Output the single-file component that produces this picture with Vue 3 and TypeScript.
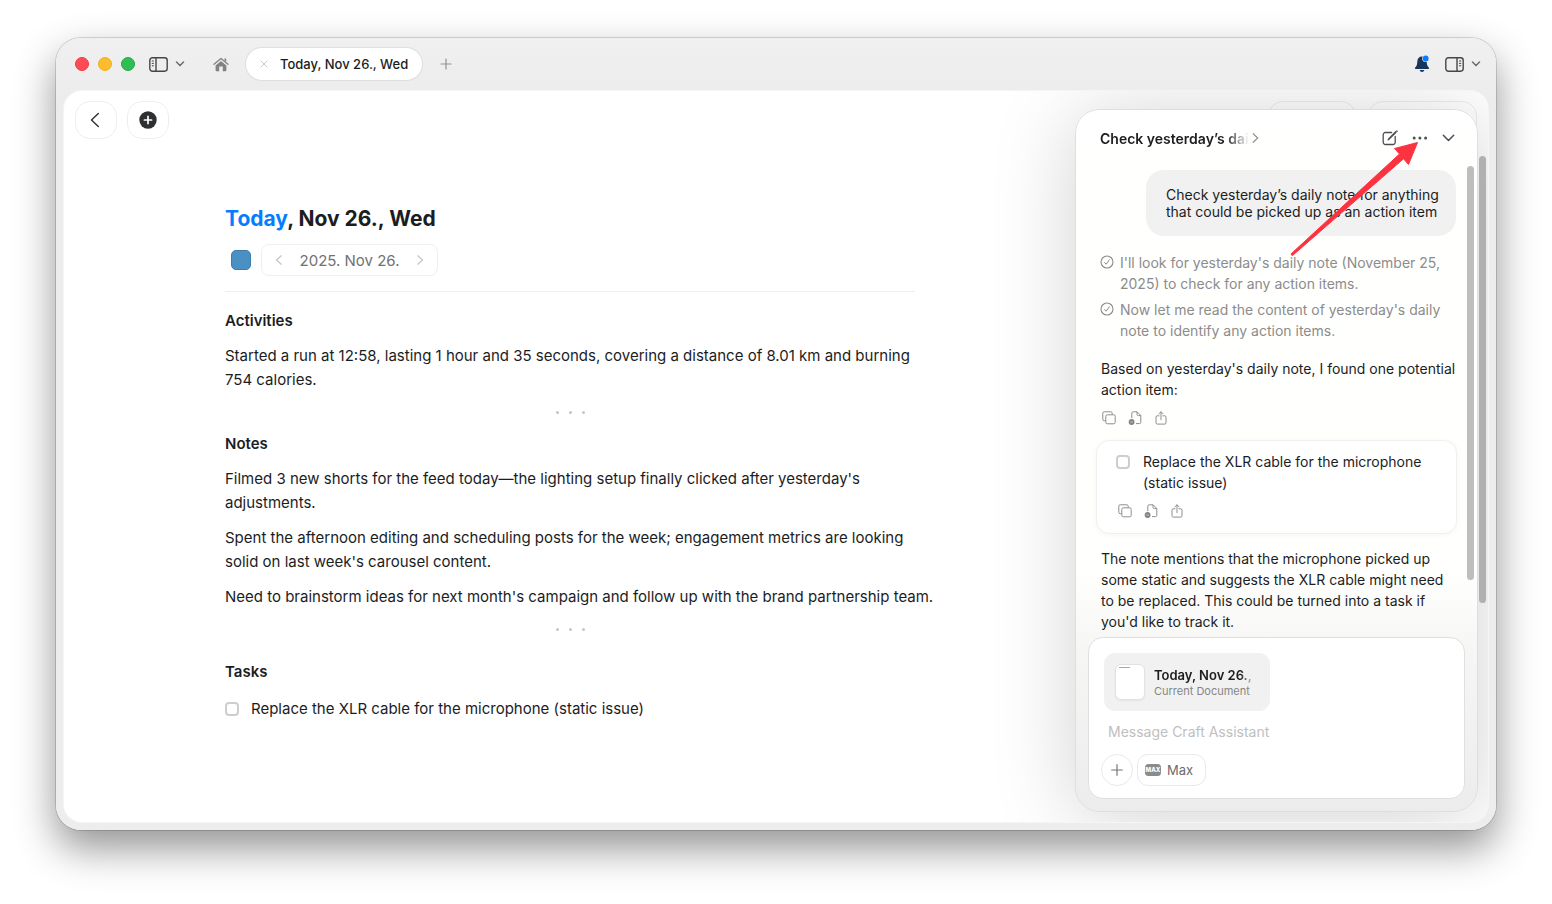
<script setup lang="ts">
import { ref } from 'vue'

interface Section {
  title: string
  paragraphs: string[]
}

const sections: Section[] = [
  {
    title: 'Activities',
    paragraphs: [
      'Started a run at 12:58, lasting 1 hour and 35 seconds, covering a distance of 8.01 km and burning 754 calories.',
    ],
  },
  {
    title: 'Notes',
    paragraphs: [
      "Filmed 3 new shorts for the feed today—the lighting setup finally clicked after yesterday's adjustments.",
      "Spent the afternoon editing and scheduling posts for the week; engagement metrics are looking solid on last week's carousel content.",
      "Need to brainstorm ideas for next month's campaign and follow up with the brand partnership team.",
    ],
  },
]

const steps: string[] = [
  "I'll look for yesterday's daily note (November 25, 2025) to check for any action items.",
  "Now let me read the content of yesterday's daily note to identify any action items.",
]

const taskText = 'Replace the XLR cable for the microphone (static issue)'
const taskDone = ref(false)
const suggestionDone = ref(false)
const message = ref('')
</script>

<template>
  <div class="desktop">
    <div class="window">
      <header class="titlebar">
        <div class="lights">
          <button class="light red" aria-label="Close window"></button>
          <button class="light yellow" aria-label="Minimize window"></button>
          <button class="light green" aria-label="Zoom window"></button>
        </div>
        <button class="plain side-toggle" aria-label="Toggle sidebar">
          <svg width="19" height="15" viewBox="0 0 19 15" fill="none" stroke="#444648" stroke-width="1.4">
            <rect x="0.8" y="0.8" width="17.4" height="13.4" rx="2.6" />
            <path d="M7 1v13" />
            <path d="M2.8 4h2M2.8 6.4h2M2.8 8.8h2" stroke-width="1" />
          </svg>
        </button>
        <button class="plain side-menu" aria-label="Sidebar options">
          <svg width="10" height="6" viewBox="0 0 10 6" fill="none" stroke="#6c6e70" stroke-width="1.5" stroke-linecap="round" stroke-linejoin="round"><path d="M1.5 1 5 4.6 8.5 1" /></svg>
        </button>
        <button class="plain home" aria-label="Home">
          <svg width="16" height="15" viewBox="0 0 16 15">
            <path d="M1 7.3 8 1.4l7 5.9" fill="none" stroke="#808284" stroke-width="1.3" stroke-linecap="round" stroke-linejoin="round" />
            <path d="M11.5 1.6h1.700v3.200l-1.700-1.400z" fill="#808284" />
            <path d="M2.600 8.400 8 3.900 13.400 8.400v4.800a1 1 0 0 1-1 1H9.800V9.600H6.200v4.600H3.600a1 1 0 0 1-1-1z" fill="#808284" />
          </svg>
        </button>
        <div class="tab">
          <button class="plain" aria-label="Close tab">
            <svg width="8" height="8" viewBox="0 0 8 8" stroke="#c9c9c9" stroke-width="1"><path d="M.7.7l6.600 6.600M7.300.7.7 7.300" /></svg>
          </button>
          <span>Today, Nov 26., Wed</span>
        </div>
        <button class="plain new-tab" aria-label="New tab">
          <svg width="12" height="12" viewBox="0 0 12 12" stroke="#909294" stroke-width="1.2" stroke-linecap="round"><path d="M6 1v10M1 6h10" /></svg>
        </button>
        <div class="grow"></div>
        <button class="plain bell" aria-label="Notifications">
          <svg width="16" height="18" viewBox="0 0 16 18">
            <path d="M8 1.6c-3 0-4.6 2.1-4.700 4.900-.1 3.400-.7 4.600-2.100 6-.6.6-.3 1.400.5 1.400h12.600c.8 0 1.100-.8.5-1.400-1.400-1.400-2-2.600-2.100-6C12.600 3.700 11 1.600 8 1.600z" fill="#16365c" />
            <path d="M5.700 15h4.600c-.3 1.200-1.200 1.900-2.300 1.900S6 16.200 5.700 15z" fill="#16365c" />
            <circle cx="11.700" cy="3.500" r="3.500" fill="#efefef" />
            <circle cx="11.700" cy="3.500" r="2.900" fill="#0a7cff" />
          </svg>
        </button>
        <button class="plain right-toggle" aria-label="Toggle assistant">
          <svg width="19" height="15" viewBox="0 0 19 15" fill="none" stroke="#444648" stroke-width="1.4">
            <rect x="0.8" y="0.8" width="17.4" height="13.4" rx="2.6" />
            <path d="M12 1v13" />
            <path d="M14 4h2.200M14 6.400h2.200M14 8.800h2.200" stroke-width="1" />
          </svg>
        </button>
        <button class="plain right-menu" aria-label="Assistant options">
          <svg width="10" height="6" viewBox="0 0 10 6" fill="none" stroke="#6c6e70" stroke-width="1.5" stroke-linecap="round" stroke-linejoin="round"><path d="M1.500 1 5 4.600 8.500 1" /></svg>
        </button>
      </header>

      <div class="content">
        <main class="document">
          <nav class="toolbar">
            <button class="tool" aria-label="Back">
              <svg width="10" height="16" viewBox="0 0 10 16" fill="none" stroke="#333537" stroke-width="1.500" stroke-linecap="round" stroke-linejoin="round"><path d="M8.300 1.500 1.500 8l6.800 6.500" /></svg>
            </button>
            <button class="tool" aria-label="Add">
              <svg width="18" height="18" viewBox="0 0 18 18"><circle cx="9" cy="9" r="8.700" fill="#2d2f31" /><path d="M9 5.400v7.200M5.400 9h7.200" stroke="#fff" stroke-width="1.700" stroke-linecap="round" /></svg>
            </button>
            <div class="grow"></div>
            <div class="ghost short"></div>
            <div class="ghost"></div>
          </nav>

          <article class="page">
            <h1><span>Today</span>, Nov 26., Wed</h1>
            <div class="date-row">
              <button class="swatch" aria-label="Note colour"></button>
              <div class="date-nav">
                <button class="plain" aria-label="Previous day">
                  <svg width="8" height="10" viewBox="0 0 8 10" fill="none" stroke="#c4c4c4" stroke-width="1.200" stroke-linecap="round" stroke-linejoin="round"><path d="M6.200.8 1.500 5l4.700 4.200" /></svg>
                </button>
                <span>2025. Nov 26.</span>
                <button class="plain" aria-label="Next day">
                  <svg width="8" height="10" viewBox="0 0 8 10" fill="none" stroke="#c4c4c4" stroke-width="1.200" stroke-linecap="round" stroke-linejoin="round"><path d="M1.800.8 6.500 5 1.800 9.200" /></svg>
                </button>
              </div>
            </div>
            <hr />
            <section v-for="section in sections" :key="section.title">
              <h2>{{ section.title }}</h2>
              <p v-for="text in section.paragraphs" :key="text">{{ text }}</p>
              <div class="dots"><i></i><i></i><i></i></div>
            </section>
            <section class="tasks">
              <h2>Tasks</h2>
              <label class="task">
                <input v-model="taskDone" type="checkbox" />
                <span>{{ taskText }}</span>
              </label>
            </section>
          </article>
        </main>

        <div class="doc-scroll"></div>

        <aside class="assistant">
          <header class="chat-head">
            <button class="plain chat-title">
              <span>Check yesterday’s dai</span>
              <svg width="7" height="10" viewBox="0 0 7 10" fill="none" stroke="#929292" stroke-width="1.200" stroke-linecap="round" stroke-linejoin="round"><path d="M1.200.7 5.700 5 1.200 9.300" /></svg>
            </button>
            <div class="grow"></div>
            <button class="plain" aria-label="New chat">
              <svg width="16" height="16" viewBox="0 0 16 16" fill="none" stroke="#4c4e50" stroke-width="1.300" stroke-linecap="round" stroke-linejoin="round">
                <path d="M9.600 2.500H3.400A2.200 2.200 0 0 0 1.200 4.700v7.600a2.200 2.200 0 0 0 2.200 2.200h7.600a2.200 2.200 0 0 0 2.200-2.200V6.400" />
                <path d="M14 2.200 7.200 9.100 6.200 9.800l.7-1.200 6.800-6.800" />
                <path d="M14.800.9 15.100 1.200" />
              </svg>
            </button>
            <button class="plain" aria-label="More">
              <svg width="16" height="4" viewBox="0 0 16 4" fill="#4c4e50"><circle cx="2.200" cy="2" r="1.500" /><circle cx="7.900" cy="2" r="1.500" /><circle cx="13.600" cy="2" r="1.500" /></svg>
            </button>
            <button class="plain" aria-label="Collapse">
              <svg width="13" height="8" viewBox="0 0 13 8" fill="none" stroke="#4c4e50" stroke-width="1.500" stroke-linecap="round" stroke-linejoin="round"><path d="M1.300 1.200 6.500 6.500l5.200-5.300" /></svg>
            </button>
          </header>

          <div class="chat">
            <p class="bubble">Check yesterday’s daily note for anything that could be picked up as an action item</p>
            <ul class="steps">
              <li v-for="step in steps" :key="step">
                <svg width="14" height="14" viewBox="0 0 14 14" fill="none" stroke="#8c8c8c" stroke-linecap="round" stroke-linejoin="round"><circle cx="7" cy="7" r="6" stroke-width="1.100" /><path d="M4.600 7.600 6.200 9.200 9.300 4.800" stroke-width="1" /></svg>
                <span>{{ step }}</span>
              </li>
            </ul>
            <p class="answer">Based on yesterday's daily note, I found one potential action item:</p>
            <div class="actions">
              <button class="plain" aria-label="Copy"><svg width="14" height="14"><use href="#icon-copy" /></svg></button>
              <button class="plain" aria-label="Insert in document"><svg width="14" height="14"><use href="#icon-insert" /></svg></button>
              <button class="plain" aria-label="Share"><svg width="14" height="14"><use href="#icon-share" /></svg></button>
            </div>
            <div class="card">
              <label>
                <input v-model="suggestionDone" type="checkbox" />
                <span>{{ taskText }}</span>
              </label>
              <div class="actions">
                <button class="plain" aria-label="Copy"><svg width="14" height="14"><use href="#icon-copy" /></svg></button>
                <button class="plain" aria-label="Insert in document"><svg width="14" height="14"><use href="#icon-insert" /></svg></button>
                <button class="plain" aria-label="Share"><svg width="14" height="14"><use href="#icon-share" /></svg></button>
              </div>
            </div>
            <p class="answer">The note mentions that the microphone picked up some static and suggests the XLR cable might need to be replaced. This could be turned into a task if you'd like to track it.</p>
          </div>

          <form class="composer" @submit.prevent>
            <div class="attachment">
              <div class="thumb"></div>
              <div class="attachment-text">
                <strong>Today, Nov 26.,</strong>
                <small>Current Document</small>
              </div>
            </div>
            <input v-model="message" type="text" placeholder="Message Craft Assistant" aria-label="Message Craft Assistant" />
            <div class="composer-row">
              <button type="button" class="add" aria-label="Attach">
                <svg width="12" height="12" viewBox="0 0 12 12" stroke="#737577" stroke-width="1.200" stroke-linecap="round"><path d="M6 .7v10.600M.7 6h10.600" /></svg>
              </button>
              <button type="button" class="model">
                <svg width="16" height="12" viewBox="0 0 16 12">
                  <rect width="16" height="12" rx="3.500" fill="#8a8b8d" />
                  <text x="8" y="8" text-anchor="middle" font-size="6" font-weight="800" fill="#fff">MAX</text>
                </svg>
                Max
              </button>
            </div>
          </form>
          <div class="chat-scroll"></div>

          <svg class="pointer" width="130" height="116" viewBox="0 0 130 116" aria-hidden="true">
            <path d="M127.500 1.500 104.500 7.500 109.500 13 1.200 112.800Q1 114.600 2.800 114.300L113.500 17.800 118.500 23.500z" fill="#fb3340" stroke="#fb3340" stroke-linejoin="round" />
          </svg>
        </aside>
      </div>
    </div>

    <svg class="symbols" width="0" height="0" aria-hidden="true">
      <symbol id="icon-copy" viewBox="0 0 14 14">
        <g fill="none" stroke="#8e8e8e" stroke-width="1" stroke-linejoin="round">
          <rect x="3.800" y="3.800" width="9.400" height="9" rx="1.500" />
          <path d="M3.500 9.700H2.200A1.400 1.400 0 0 1 .8 8.300V2.200A1.400 1.400 0 0 1 2.200.8h6.600a1.400 1.400 0 0 1 1.400 1.400v1.300" />
        </g>
      </symbol>
      <symbol id="icon-insert" viewBox="0 0 14 14">
        <path d="M3.800 7.200V2.200A1.400 1.400 0 0 1 5.200.8h3.900l3.700 3.700v6.700a1.400 1.400 0 0 1-1.400 1.400H8M9 .9v2.400a1.300 1.300 0 0 0 1.300 1.300h2.400" fill="none" stroke="#8e8e8e" stroke-width="1" stroke-linejoin="round" />
        <circle cx="3.600" cy="11" r="2.900" fill="#858585" />
        <path d="M2.200 11h2.800" stroke="#d5d5d5" stroke-width=".7" />
      </symbol>
      <symbol id="icon-share" viewBox="0 0 14 14">
        <path d="M5 4.800H3.300A1.300 1.300 0 0 0 2 6.100v5.700a1.300 1.300 0 0 0 1.300 1.300h7.400a1.300 1.300 0 0 0 1.300-1.300V6.100a1.300 1.300 0 0 0-1.300-1.300H9M7 8.700V.9M4.900 2.900 7 .8l2.100 2.100" fill="none" stroke="#8e8e8e" stroke-width="1" stroke-linecap="round" stroke-linejoin="round" />
      </symbol>
    </svg>
  </div>
</template>

<style>
body {
  margin: 0;
  background: #fff;
}
</style>

<style scoped>
* {
  box-sizing: border-box;
}
.desktop {
  display: flex;
  min-height: 100vh;
  padding: 38px 56px 74px;
  font-family: Inter, "Liberation Sans", sans-serif;
  color: #1b1d1f;
  overflow: hidden;
}
button,
input {
  font: inherit;
  color: inherit;
}
h1,
h2,
p,
ul {
  margin: 0;
  padding: 0;
}
svg {
  display: block;
  flex: none;
}
.symbols {
  position: absolute;
}
.plain {
  display: flex;
  align-items: center;
  padding: 0;
  border: 0;
  background: none;
}
.grow {
  flex: 1;
}
.window {
  flex: 1;
  min-width: 0;
  display: flex;
  flex-direction: column;
  border-radius: 25px;
  background: linear-gradient(#f0f0f0, #ececec 60px, #ededed);
  box-shadow: 0 0 0 1px rgba(0, 0, 0, 0.14), 0 18px 40px rgba(0, 0, 0, 0.43);
}
.titlebar {
  display: flex;
  align-items: center;
  height: 53px;
  padding: 0 15px 1px 19px;
}
.lights {
  display: flex;
  gap: 9px;
}
.light {
  width: 14px;
  height: 14px;
  padding: 0;
  border: 1px solid;
  border-radius: 50%;
}
.red {
  background: #ff4b55;
  border-color: #ee3c48;
}
.yellow {
  background: #fcbc2d;
  border-color: #eeaf20;
}
.green {
  background: #30bd55;
  border-color: #20ac45;
}
.side-toggle {
  margin-left: 14px;
}
.side-menu {
  margin-left: 7px;
}
.home {
  margin-left: 28px;
}
.tab {
  display: flex;
  align-items: center;
  gap: 12px;
  height: 32px;
  margin-left: 17px;
  padding: 0 14px;
  border-radius: 16px;
  background: #fff;
  box-shadow: 0 0 1px 1px rgba(0, 0, 0, 0.07);
  font-size: 13px;
  font-weight: 500;
}
.new-tab {
  margin-left: 18px;
}
.right-toggle {
  margin-left: 15px;
}
.right-menu {
  margin-left: 7px;
}
.content {
  position: relative;
  flex: 1;
  display: flex;
  margin: 0 8px 8px;
  border-radius: 18px;
  background: #fff;
  box-shadow: 0 0 1px 1px rgba(255, 255, 255, 0.5);
  overflow: hidden;
}
.document {
  flex: 1;
  min-width: 0;
}
.toolbar {
  display: flex;
  gap: 10px;
  padding: 10px 11px 0;
}
.tool {
  display: flex;
  align-items: center;
  justify-content: center;
  width: 42px;
  height: 38px;
  padding: 0;
  border: 1px solid #eee;
  border-radius: 15px;
  background: #fff;
}
.tool:first-child {
  padding-right: 3px;
}
.ghost {
  width: 109px;
  height: 38px;
  border: 1px solid #eee;
  border-radius: 15px;
}
.ghost.short {
  width: 88px;
  margin-right: 2px;
}
.page {
  max-width: 690px;
  margin: 0 auto 0 max(24px, calc((100% - 412px - 690px) / 2));
  padding: 64px 0 40px;
}
h1 {
  font-size: 21px;
  line-height: 32px;
  font-weight: 700;
}
h1 span {
  color: #067dff;
}
.date-row {
  display: flex;
  align-items: center;
  gap: 10px;
  height: 32px;
  margin-top: 9px;
  padding-left: 6px;
}
.swatch {
  width: 20px;
  height: 20px;
  padding: 0;
  border: 1px solid #3d7dac;
  border-radius: 5px;
  background: #4a90c2;
}
.date-nav {
  display: flex;
  align-items: center;
  justify-content: space-between;
  width: 177px;
  height: 32px;
  padding: 0 13px;
  border: 1px solid #efefef;
  border-radius: 8px;
  font-size: 15px;
  color: #727272;
}
hr {
  height: 1px;
  margin: 15px 0 0;
  border: 0;
  background: #efefef;
}
h2 {
  margin-top: 17px;
  font-size: 15px;
  line-height: 24px;
  font-weight: 600;
}
section + section h2 {
  margin-top: 12px;
}
/* Running text may hang slightly past the rule on the right. */
.page p {
  margin: 11px -20px 0 0;
  font-size: 15px;
  line-height: 24px;
}
.page h2 + p {
  margin-top: 11px;
}
.dots {
  display: flex;
  align-items: center;
  justify-content: center;
  gap: 10px;
  height: 16px;
  margin-top: 12px;
}
.dots i {
  width: 3px;
  height: 3px;
  border-radius: 50%;
  background: #c6c6c6;
}
.page .tasks h2 {
  margin-top: 23px;
}
.task {
  display: flex;
  align-items: center;
  gap: 12px;
  margin-top: 13px;
  font-size: 15px;
  line-height: 24px;
}
input[type='checkbox'] {
  appearance: none;
  flex: none;
  width: 14px;
  height: 14px;
  margin: 0;
  border: 2px solid #cdcdcd;
  border-radius: 4px;
  background: #fff;
}
.doc-scroll {
  position: absolute;
  top: 65px;
  right: 2px;
  width: 7px;
  height: 447px;
  border-radius: 4px;
  background: #b0b0b0;
  z-index: 1;
}
.assistant {
  position: absolute;
  top: 18px;
  right: 10px;
  bottom: 10px;
  width: 403px;
  display: flex;
  flex-direction: column;
  padding: 0 12px 12px;
  border: 1px solid #dedede;
  border-radius: 24px;
  background: linear-gradient(#fff 0, #fffffd 460px, #f6f6f5 540px, #ececec 100%);
  box-shadow: 0 6px 84px rgba(0, 0, 0, 0.18);
  font-size: 14px;
}
.chat-head {
  display: flex;
  align-items: center;
  gap: 14px;
  height: 56px;
  padding: 0 10px 0 12px;
}
.chat-title {
  gap: 3px;
  font-weight: 600;
}
.chat-title span {
  white-space: nowrap;
  mask-image: linear-gradient(90deg, #000 84%, transparent);
}
.chat {
  flex: 1;
  min-height: 0;
  overflow: hidden;
  padding: 4px 8px 0;
}
.bubble {
  width: 310px;
  margin: 0 1px 0 auto;
  padding: 16px 12px 16px 20px;
  border-radius: 18px;
  background: #f1f1f1;
  line-height: 17px;
}
.steps {
  display: flex;
  flex-direction: column;
  gap: 5px;
  margin: 16px 0 0 4px;
  list-style: none;
  line-height: 21px;
  color: #8c8c8c;
}
.steps li {
  display: flex;
  gap: 6px;
}
.steps svg {
  margin-top: 3px;
}
.answer {
  margin: 17px 0 0 5px;
  line-height: 21px;
}
.actions {
  display: flex;
  gap: 12px;
  height: 14px;
  margin: 11px 0 0 6px;
}
.card {
  margin-top: 15px;
  padding: 10px 19px 15px;
  border: 1px solid #f0f0f0;
  border-radius: 13px;
  background: #fff;
  box-shadow: 0 1px 6px rgba(0, 0, 0, 0.04);
}
.card label {
  display: flex;
  gap: 13px;
  line-height: 21px;
}
.card input {
  margin-top: 4px;
}
.card .actions {
  margin-left: 2px;
}
.card + .answer {
  margin-top: 14px;
}
.composer {
  display: flex;
  flex-direction: column;
  align-items: flex-start;
  height: 162px;
  padding: 15px 15px 12px 12px;
  border: 1px solid #e0e0e0;
  border-radius: 15px;
  background: #fff;
}
.attachment {
  display: flex;
  align-items: center;
  gap: 9px;
  width: 166px;
  height: 58px;
  margin-left: 3px;
  padding: 0 11px;
  border-radius: 11px;
  background: #f1f1f1;
}
.thumb {
  flex: none;
  width: 30px;
  height: 36px;
  padding: 2px 3px;
  border: 1px solid #e2e2e2;
  border-radius: 6px;
  background: #fff;
  box-shadow: 0 1px 2px rgba(0, 0, 0, 0.06);
}
.thumb::before {
  content: '';
  display: block;
  width: 11px;
  height: 1px;
  background: #a8a8a8;
}
.attachment-text {
  display: flex;
  flex-direction: column;
  align-items: flex-start;
}
.attachment strong {
  white-space: nowrap;
  font-size: 13px;
  line-height: 17px;
  font-weight: 600;
  mask-image: linear-gradient(90deg, #000 88%, rgba(0, 0, 0, 0.2));
}
.attachment small {
  font-size: 11px;
  line-height: 14px;
  color: #868686;
  white-space: nowrap;
}
.composer input {
  width: 100%;
  height: 21px;
  margin-top: 10px;
  padding: 0 0 0 7px;
  border: 0;
  outline: 0;
  background: none;
}
.composer input::placeholder {
  color: #c0c0c0;
  opacity: 1;
}
.composer-row {
  display: flex;
  gap: 4px;
  margin-top: 12px;
}
.add,
.model {
  display: flex;
  align-items: center;
  justify-content: center;
  width: 32px;
  height: 32px;
  padding: 0;
  border: 1px solid #e9e9e9;
  border-radius: 16px;
  background: #fff;
}
.model {
  justify-content: flex-start;
  gap: 6px;
  width: 69px;
  padding-left: 7px;
  border-radius: 11px;
  font-size: 13px;
  color: #6c6c6c;
}
.chat-scroll {
  position: absolute;
  top: 56px;
  right: 3px;
  width: 7px;
  height: 414px;
  border-radius: 4px;
  background: #bebebe;
}
.pointer {
  position: absolute;
  top: 31px;
  right: 57px;
}
</style>
